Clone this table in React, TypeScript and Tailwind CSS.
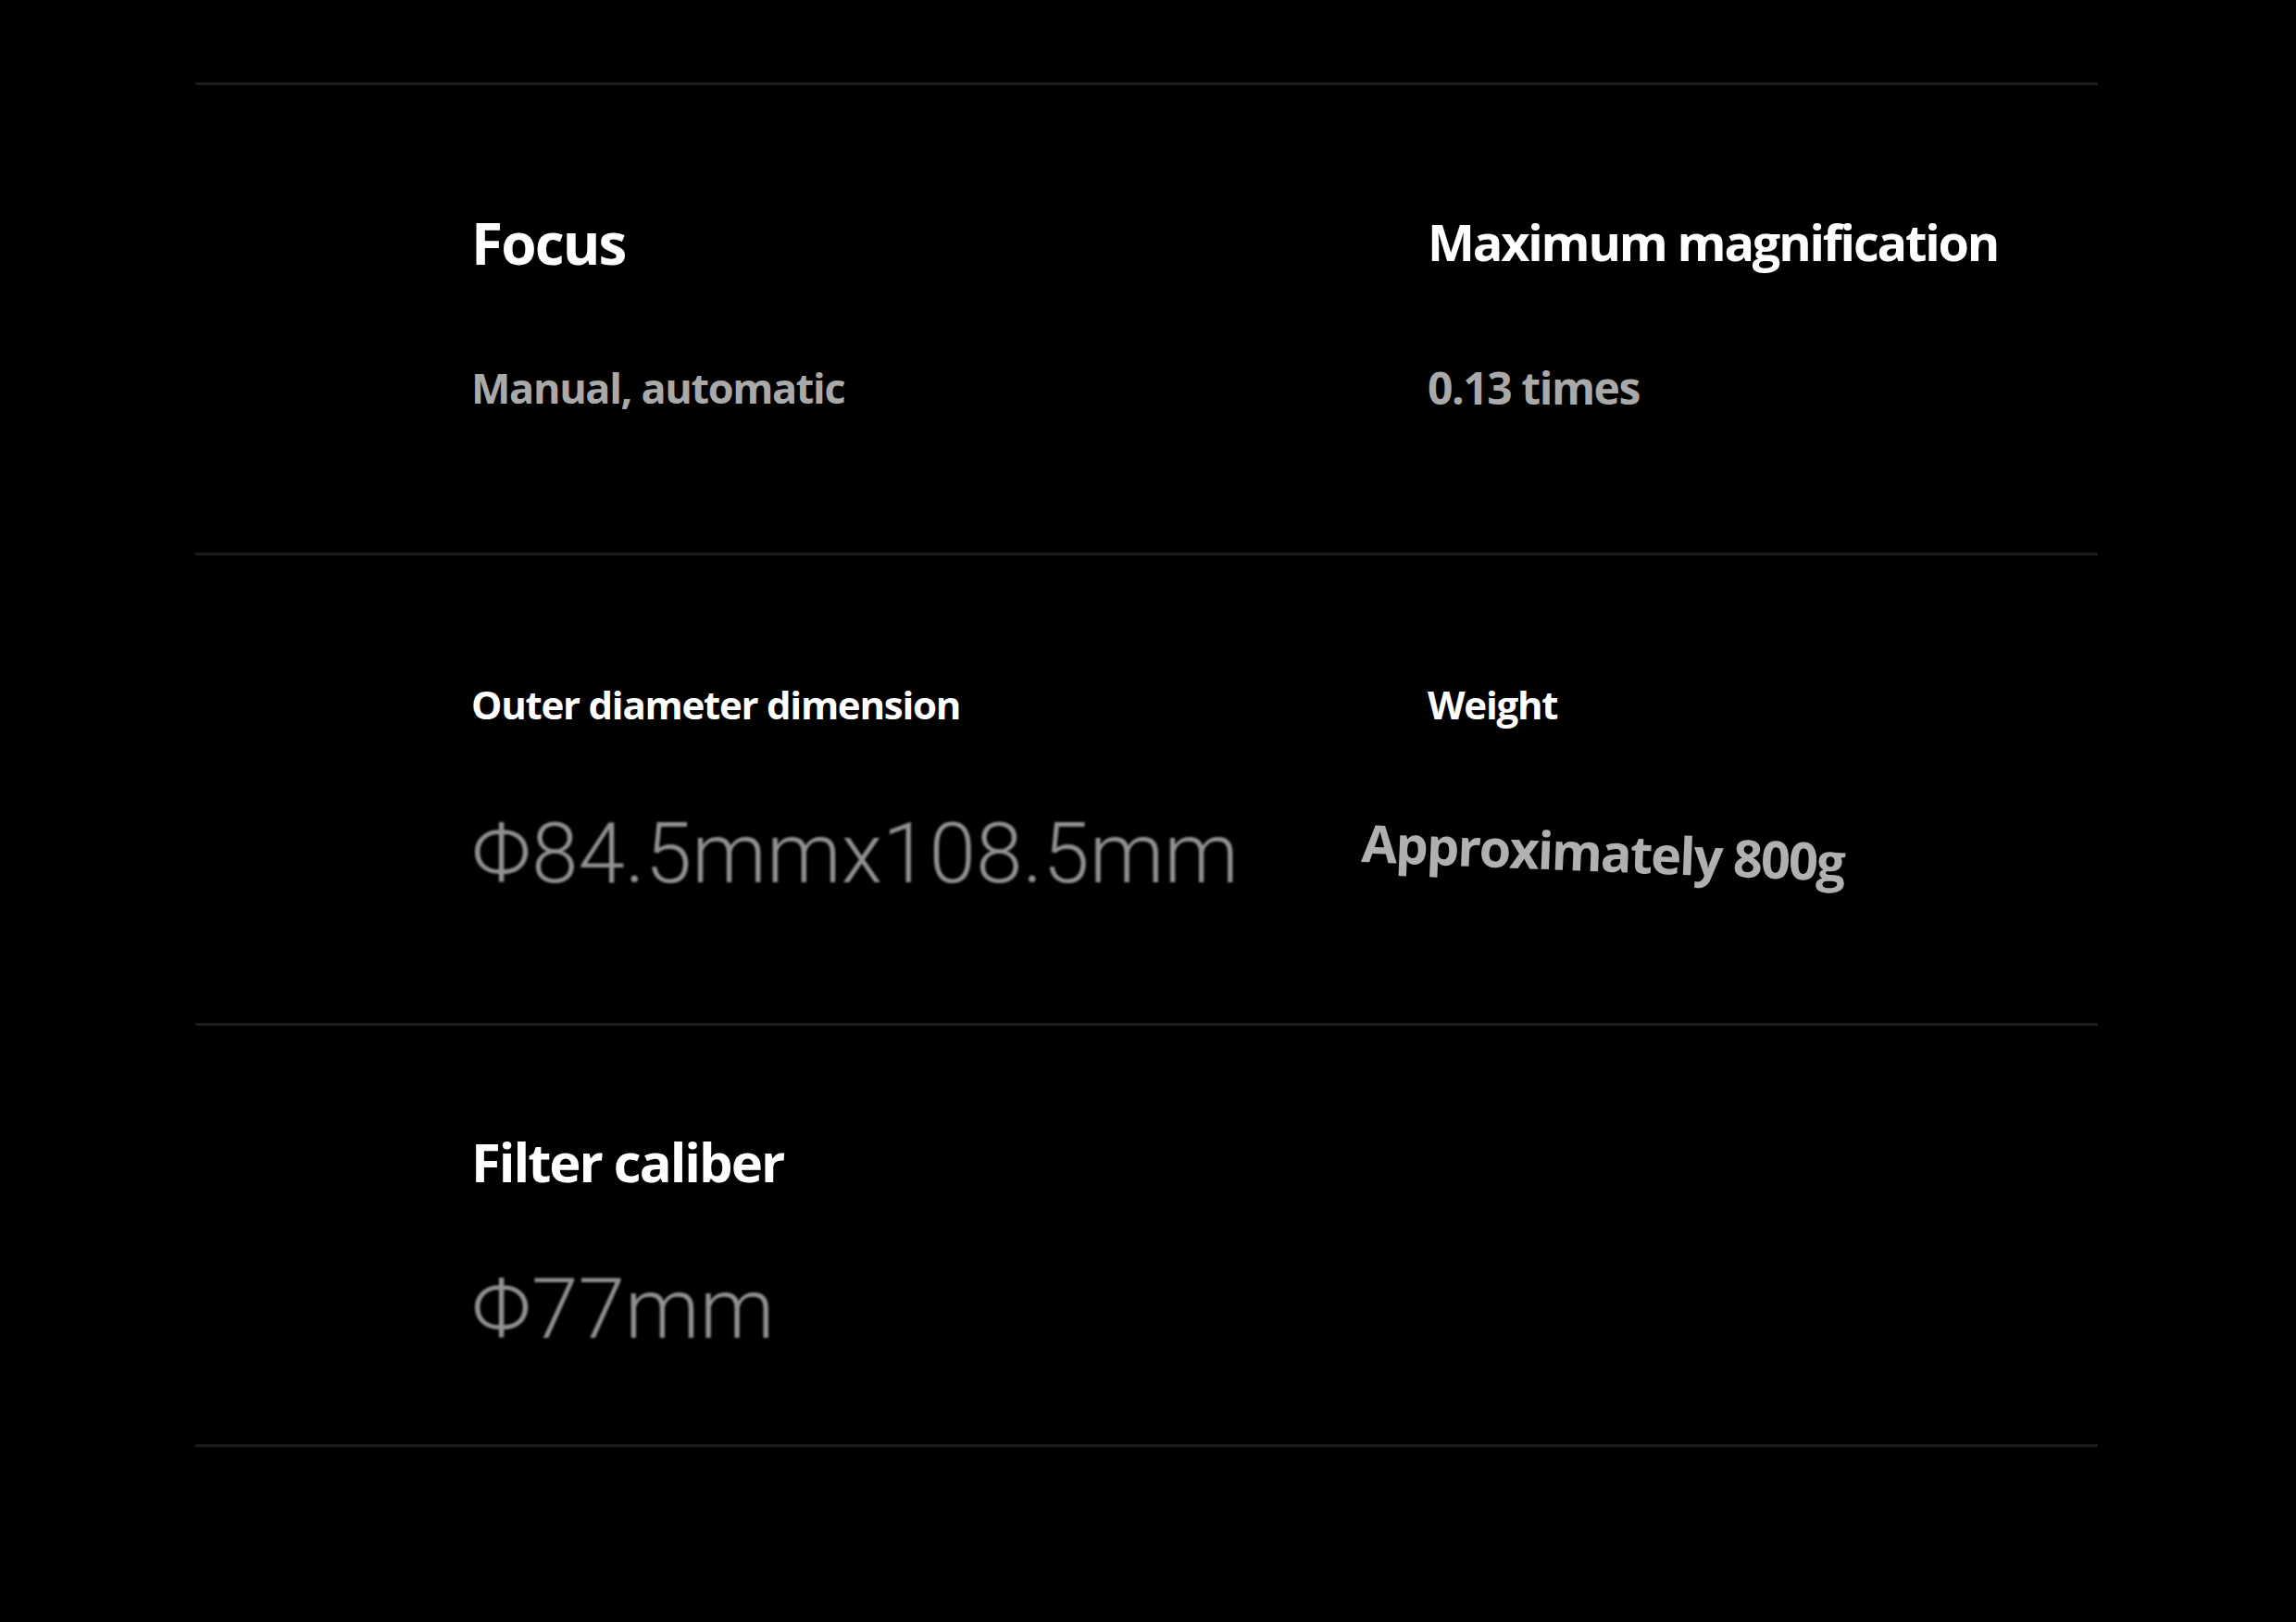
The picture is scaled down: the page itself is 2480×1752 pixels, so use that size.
import React from "react";

const head = "font-['Open_Sans',sans-serif] font-bold text-white leading-none whitespace-nowrap";
const val = "font-['Open_Sans',sans-serif] font-bold text-[#a9a9a9] leading-none whitespace-nowrap";
const big = "font-['Roboto','Liberation_Sans',sans-serif] font-light text-[#909090] leading-none whitespace-nowrap blur-[0.8px]";

function Line() {
  return <div className="h-[3px] w-full bg-[#1c1c1c]" />;
}

export default function App() {
  return (
    <div className="min-h-[1752px] w-full bg-black">
      <div className="ml-[211px] w-[2055px] pt-[89px]">
        <Line />
        <div className="grid h-[505px] grid-cols-[1331px_1fr]">
          <div className="flex flex-col items-start pl-[298px] pt-[139px]">
            <div className={`${head} text-[62px] tracking-[-0.03em]`}>Focus</div>
            <div className={`${val} mt-[103px] text-[45px] tracking-[-0.03em]`}>Manual, automatic</div>
          </div>
          <div className="flex flex-col items-start pt-[142px]">
            <div className={`${head} text-[54px] tracking-[-0.04em]`}>Maximum magnification</div>
            <div className={`${val} mt-[107px] text-[48px] tracking-[-0.03em]`}>0.13 times</div>
          </div>
        </div>
        <Line />
        <div className="grid h-[505px] grid-cols-[1331px_1fr]">
          <div className="flex flex-col items-start pl-[298px] pt-[140px]">
            <div className={`${head} text-[42px] tracking-[-0.03em]`}>Outer diameter dimension</div>
            <div className={`${big} mt-[95px] text-[91px]`}>Φ84.5mmx108.5mm</div>
          </div>
          <div className="flex flex-col items-start pt-[140px]">
            <div className={`${head} text-[42px] tracking-[-0.03em]`}>Weight</div>
            <div className={`${val} -ml-[71px] mt-[99px] origin-left rotate-[2.3deg] text-[56px] tracking-[-0.035em] text-[#b0b0b0]`}>
              Approximately 800g
            </div>
          </div>
        </div>
        <Line />
        <div className="grid h-[452px] grid-cols-[1331px_1fr]">
          <div className="flex flex-col items-start pl-[298px] pt-[118px]">
            <div className={`${head} text-[58px] tracking-[-0.035em]`}>Filter caliber</div>
            <div className={`${big} mt-[85px] text-[91px]`}>Φ77mm</div>
          </div>
          <div />
        </div>
        <Line />
      </div>
    </div>
  );
}
